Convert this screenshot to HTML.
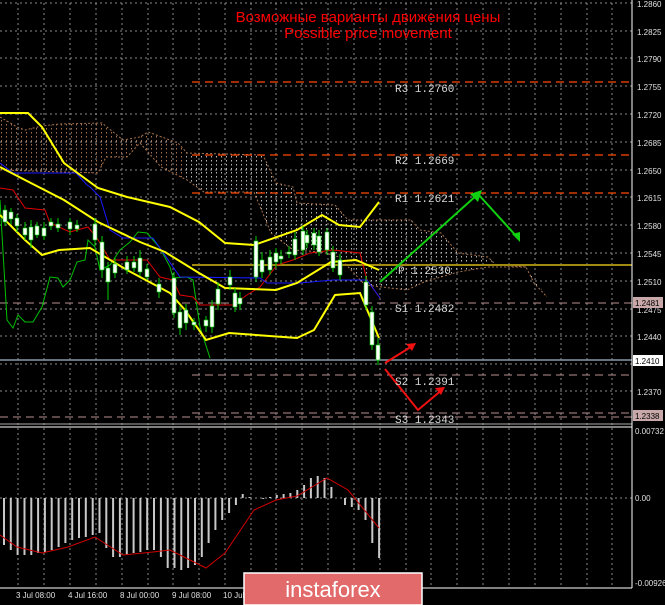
<!DOCTYPE html>
<html><head><meta charset="utf-8"><style>
html,body{margin:0;padding:0;background:#000;}
svg{display:block;}
text{font-family:"Liberation Sans",sans-serif;}
text.m{font-family:"Liberation Mono",monospace;}
</style></head><body>
<svg width="665" height="605" viewBox="0 0 665 605" xmlns="http://www.w3.org/2000/svg">
<defs>
<pattern id="hw" width="5" height="4" patternUnits="userSpaceOnUse"><rect x="1" y="0" width="1" height="1.5" fill="#b8b8b8"/></pattern>
<pattern id="ho" width="5" height="4" patternUnits="userSpaceOnUse"><rect x="1" y="0" width="1" height="1.5" fill="#a8724c"/></pattern>
<clipPath id="cl"><rect x="0" y="0" width="185" height="425"/></clipPath>
<clipPath id="cr"><rect x="185" y="0" width="450" height="425"/></clipPath>
</defs>
<rect width="665" height="605" fill="#000"/>
<g stroke="#8a8a8a" stroke-width="1" stroke-dasharray="2,3" fill="none">
<path d="M18 3V425M44 3V425M70 3V425M96 3V425M122 3V425M148 3V425M173 3V425M199 3V425M225 3V425M251 3V425M276 3V425M302 3V425M328 3V425M354 3V425M380 3V425M406 3V425M431 3V425M457 3V425M483 3V425M509 3V425M535 3V425M561 3V425M587 3V425M612 3V425"/>
<path d="M18 428V588M44 428V588M70 428V588M96 428V588M122 428V588M148 428V588M173 428V588M199 428V588M225 428V588M251 428V588M276 428V588M302 428V588M328 428V588M354 428V588M380 428V588M406 428V588M431 428V588M457 428V588M483 428V588M509 428V588M535 428V588M561 428V588M587 428V588M612 428V588"/>
<path d="M0 3H632M0 31H632M0 58H632M0 86H632M0 114H632M0 142H632M0 170H632M0 197H632M0 225H632M0 253H632M0 281H632M0 309H632M0 336H632M0 364H632M0 391H632M0 498H632"/>
</g>
<g clip-path="url(#cl)"><polygon fill="url(#ho)" points="0,117 17,127 25,130 42,126 59,124 102,123 123,140 140,137 148,132 178,143 187,153 263,155 276,183 293,187 297,203 335,205 348,220 411,220 420,230 441,233 458,253 488,257 496,265 526,267 534,283 547,297 526,267 488,267 458,272 424,282 407,290 365,285 339,257 322,252 293,250 271,233 254,192 204,192 187,180 161,167 140,143 127,157 106,157 98,173 0,170"/></g>
<g clip-path="url(#cr)"><polygon fill="url(#hw)" points="0,117 17,127 25,130 42,126 59,124 102,123 123,140 140,137 148,132 178,143 187,153 263,155 276,183 293,187 297,203 335,205 348,220 411,220 420,230 441,233 458,253 488,257 496,265 526,267 534,283 547,297 526,267 488,267 458,272 424,282 407,290 365,285 339,257 322,252 293,250 271,233 254,192 204,192 187,180 161,167 140,143 127,157 106,157 98,173 0,170"/></g>
<polyline fill="none" stroke="#a8724c" stroke-dasharray="2,2" points="0,117 17,127 25,130 42,126 59,124 102,123 123,140 140,137 148,132 178,143 187,153 263,155 276,183 293,187 297,203 335,205 348,220 411,220 420,230 441,233 458,253 488,257 496,265 526,267 534,283 547,297"/>
<polyline fill="none" stroke="#a8724c" stroke-dasharray="2,2" points="0,170 98,173 106,157 127,157 140,143 161,167 187,180 204,192 254,192 271,233 293,250 322,252 339,257 365,285 407,290 424,282 458,272 488,267 526,267"/>
<g stroke="#ff4a00" stroke-width="1.3" stroke-dasharray="8,5" fill="none">
<path d="M192 82H632M192 155H632M192 193H632"/>
</g>
<path d="M192 265H632" stroke="#a08a10" stroke-width="2"/>
<g stroke="#b89090" stroke-width="1" stroke-dasharray="8,5" fill="none">
<path d="M0 303H632M192 375H632M192 413H632M0 417H632"/>
</g>
<path d="M0 360H632" stroke="#8898a8" stroke-width="1.5"/>
<path d="M0 424H632" stroke="#aaa" stroke-width="1"/>
<path d="M0 427H632" stroke="#fff" stroke-width="1"/>
<polyline fill="none" stroke="#00c000" stroke-width="1" points="0,200 7,320 13,328 18,315 25,322 33,322 42,307 50,277 58,278 63,287 70,280 77,262 85,260 88,240 95,247 100,270 110,265 120,250 130,242 138,232 147,233 160,248 170,267 173,278 187,277 193,280 200,327 210,358"/>
<polyline fill="none" stroke="#e00000" stroke-width="1" points="0,188 13,190 25,208 45,210 50,223 70,232 88,227 97,238 110,260 147,260 160,277 173,280 180,295 193,297 200,305 233,305 247,295 260,287 277,265 293,260 310,253 333,250 360,253 367,280 380,298"/>
<polyline fill="none" stroke="#1a1aff" stroke-width="1" points="0,163 13,173 76,173 87,185 90,187 100,197 110,230 123,238 153,238 180,277 260,278 267,283 300,283 333,280 367,280 380,298"/>
<polyline fill="none" stroke="#ffff00" stroke-width="2" points="0,113 28,113 42,127 64,163 98,188 127,197 170,207 199,222 225,243 254,245 297,230 322,215 339,225 360,227 379,202"/>
<polyline fill="none" stroke="#ffff00" stroke-width="2" points="0,167 25,180 64,200 98,222 140,242 165,252 199,273 225,288 276,290 297,283 331,262 356,260 379,270"/>
<polyline fill="none" stroke="#ffff00" stroke-width="2" points="0,215 25,240 42,255 59,250 90,248 127,270 170,293 185,310 206,340 229,333 297,338 314,330 335,295 360,293 379,338"/>
<g stroke="#00d000" stroke-width="1">
<path d="M5 205V226M11 208V224M17 214V232M25 222V240M31 220V248M37 222V238M44 222V240M51 218V230M58 218V232M70 218V235M77 220V232M95 218V246M102 236V278M108 262V300M115 258V278M127 256V274M134 256V272M140 250V276M147 264V280M159 278V298M174 272V318M180 306V335M186 304V330M194 318V330M206 316V332M212 300V333M218 282V310M230 270V290M235 288V312M240 292V310M256 236V282M262 252V278M270 250V275M276 248V268M281 250V264M289 246V258M295 232V260M303 226V255M307 230V248M314 228V250M319 230V256M327 228V255M333 246V272M340 254V280M366 276V310M372 306V350M378 338V365"/>
</g>
<g fill="#fff" stroke="#00d000" stroke-width="0.6">
<rect x="3" y="210" width="4" height="12"/><rect x="9" y="212" width="4" height="7"/><rect x="15" y="218" width="4" height="8"/><rect x="23" y="228" width="4" height="7"/><rect x="29" y="227" width="4" height="13"/><rect x="35" y="226" width="4" height="9"/><rect x="42" y="228" width="4" height="8"/><rect x="49" y="222" width="4" height="4"/><rect x="56" y="224" width="4" height="4"/><rect x="68" y="222" width="4" height="7"/><rect x="75" y="225" width="4" height="4"/><rect x="93" y="224" width="4" height="16"/><rect x="100" y="242" width="4" height="28"/><rect x="106" y="268" width="4" height="14"/><rect x="113" y="264" width="4" height="9"/><rect x="125" y="262" width="4" height="8"/><rect x="132" y="262" width="4" height="6"/><rect x="138" y="258" width="4" height="14"/><rect x="145" y="269" width="4" height="8"/><rect x="157" y="284" width="4" height="8"/><rect x="172" y="278" width="4" height="35"/><rect x="178" y="312" width="4" height="16"/><rect x="184" y="310" width="4" height="13"/><rect x="192" y="322" width="4" height="3"/><rect x="204" y="320" width="4" height="6"/><rect x="210" y="306" width="4" height="21"/><rect x="216" y="289" width="4" height="15"/><rect x="228" y="277" width="4" height="8"/><rect x="233" y="293" width="4" height="14"/><rect x="238" y="298" width="4" height="6"/><rect x="254" y="241" width="4" height="36"/><rect x="260" y="260" width="4" height="12"/><rect x="268" y="257" width="4" height="13"/><rect x="274" y="253" width="4" height="9"/><rect x="279" y="256" width="4" height="3"/><rect x="287" y="252" width="4" height="2"/><rect x="293" y="239" width="4" height="16"/><rect x="301" y="231" width="4" height="19"/><rect x="305" y="235" width="4" height="8"/><rect x="312" y="233" width="4" height="12"/><rect x="317" y="236" width="4" height="16"/><rect x="325" y="232" width="4" height="18"/><rect x="331" y="252" width="4" height="16"/><rect x="338" y="260" width="4" height="15"/><rect x="364" y="282" width="4" height="23"/><rect x="370" y="312" width="4" height="33"/><rect x="376" y="345" width="4" height="15"/>
</g>
<g stroke="#10d010" stroke-width="2" fill="none"><path d="M380 282L478 194L518 238"/></g>
<polygon fill="#10d010" points="482,190 470,194 478,202"/>
<polygon fill="#10d010" points="520,242 512,234 520,232"/>
<g stroke="#f01010" stroke-width="2" fill="none"><path d="M385 363L414 345M385 369L418 410L443 389"/></g>
<polygon fill="#f01010" points="416,343 406,344 412,351"/>
<polygon fill="#f01010" points="445,387 435,388 441,395"/>
<g fill="#d8d8d8" font-size="11">
<text class="m" x="395" y="92">R3 1.2760</text><text class="m" x="395" y="164">R2 1.2669</text><text class="m" x="395" y="202">R1 1.2621</text><text class="m" x="398" y="274">P 1.2530</text><text class="m" x="395" y="312">S1 1.2482</text><text class="m" x="395" y="385">S2 1.2391</text><text class="m" x="395" y="423">S3 1.2343</text>
</g>
<text x="368" y="22" fill="#ff0000" font-size="15" text-anchor="middle">Возможные варианты движения цены</text>
<text x="368" y="38" fill="#ff0000" font-size="15" text-anchor="middle">Possible price movement</text>
<path d="M632 0V588M0 588H632" stroke="#fff" stroke-width="1"/>
<g fill="#e0e0e0" font-size="8">
<text x="637" y="7">1.2860</text><text x="637" y="35">1.2825</text><text x="637" y="62">1.2790</text><text x="637" y="90">1.2755</text><text x="637" y="118">1.2720</text><text x="637" y="146">1.2685</text><text x="637" y="174">1.2650</text><text x="637" y="201">1.2615</text><text x="637" y="229">1.2580</text><text x="637" y="257">1.2545</text><text x="637" y="285">1.2510</text><text x="637" y="313">1.2475</text><text x="637" y="340">1.2440</text><text x="637" y="395">1.2370</text>
<text x="635" y="434">0.00732</text><text x="635" y="501">0.00</text><text x="635" y="586">-0.00926</text>
<text x="16" y="598">3 Jul 08:00</text><text x="68" y="598">4 Jul 16:00</text><text x="120" y="598">8 Jul 00:00</text><text x="172" y="598">9 Jul 08:00</text><text x="223" y="598">10 Jul</text>
</g>
<rect x="633" y="297" width="30" height="11" fill="#c8a8a8"/><text x="635" y="306" fill="#000" font-size="8">1.2481</text>
<rect x="633" y="355" width="30" height="11" fill="#fff"/><text x="635" y="364" fill="#000" font-size="8">1.2410</text>
<rect x="633" y="410" width="30" height="11" fill="#c8a8a8"/><text x="635" y="419" fill="#000" font-size="8">1.2338</text>
<path stroke="#c8c8c8" stroke-width="2" fill="none" d="M4 498V545M10.8 498V550M17.6 498V555M24.5 498V555M31.3 498V555M38.1 498V553M44.9 498V552M51.7 498V550M58.6 498V547M65.4 498V543M72.2 498V540M79 498V538M85.8 498V537M92.7 498V535M99.5 498V533M106.3 498V548M113.1 498V557M119.9 498V557M126.8 498V555M133.6 498V553M140.4 498V552M147.2 498V550M154 498V550M160.9 498V557M167.7 498V568M174.5 498V568M181.3 498V570M188.1 498V568M195 498V565M201.8 498V557M208.6 498V543M215.4 498V530M222.2 498V520M229.1 498V513M235.9 498V505M242.7 498V494M249.5 498V497M263.2 498V499M270 498V497M276.8 498V495M283.6 498V494M290.4 498V493M297.3 498V490M304.1 498V485M310.9 498V478M317.7 498V476M324.5 498V478M331.4 498V487M345 498V505M351.8 498V507M358.6 498V510M365.5 498V520M372.3 498V543M379.1 498V558"/>
<polyline fill="none" stroke="#d00000" stroke-width="1" points="0,535 17,547 42,553 68,547 95,537 123,555 153,552 170,550 206,568 225,553 254,510 276,500 297,496 327,478 348,490 379,528"/>
<rect x="244" y="573" width="178" height="32" fill="#e26a6a" stroke="#fff" stroke-width="1.5"/>
<text x="333" y="597" fill="#fff" font-size="22" text-anchor="middle">instaforex</text>
</svg>
</body></html>
